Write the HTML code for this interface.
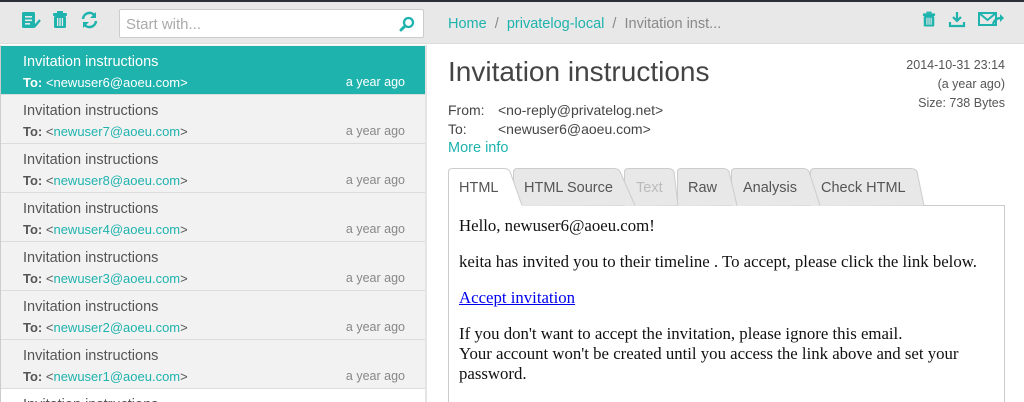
<!DOCTYPE html><html><head><style>
*{margin:0;padding:0;box-sizing:border-box}
html,body{width:1024px;height:402px;overflow:hidden}
body{background:#fff;font-family:"Liberation Sans",sans-serif;position:relative}
.topline{position:absolute;left:0;top:0;width:1024px;height:2px;background:#2b2f3a}
.hdr{position:absolute;left:0;top:2px;width:1024px;height:42px;background:#e8e8e8;border-bottom:1px solid #ddd}
.left{position:absolute;left:0;top:45px;width:427px;height:357px;overflow:hidden;background:#f2f2f2;border-left:1px solid #ccc;border-right:2px solid #e4e4e4}
.row{position:absolute;left:0;width:425px;height:49px;border-bottom:1px solid #dcdcdc;color:#555}
.row .t{position:absolute;left:22px;top:8px;font-size:14.5px}
.row .to{position:absolute;left:22px;top:29px;font-size:13px}
.row .to span{color:#1fb3ae}
.row .a{position:absolute;right:21px;top:29px;font-size:12.5px;color:#888}
.sel{background:#1fb3ae;color:#fff}
.sel .to span,.sel .a{color:#fff}
.search{position:absolute;left:119px;top:7px;width:305px;height:29px;background:#fff;border:1px solid #ccc;border-radius:2px;font-size:15px;color:#aaa;padding:6px 6px}
.bc{position:absolute;left:448px;top:14px;font-size:14.5px;color:#888}
.bc a{color:#1fb3ae}
.h1{position:absolute;left:448px;top:56px;font-size:28px;color:#444}
.meta{position:absolute;right:19px;top:56px;text-align:right;font-size:12.5px;color:#555;line-height:19px}
.hd{position:absolute;left:448px;font-size:14px;color:#444}
.tabs{position:absolute;left:448px;top:168px;width:500px;height:38px;z-index:2}
.tabs span{position:absolute;top:12px;font-size:14.5px;color:#555}
.box{position:absolute;left:448px;top:205px;width:557px;height:197px;overflow:hidden;border:1px solid #ccc;border-bottom:none;font-family:"Liberation Serif",serif;font-size:16.8px;color:#111;padding:10px 10px 0;line-height:20px}
.box p{margin-bottom:16px}
</style></head><body>
<div class="topline"></div>
<div class="hdr">
<svg style="position:absolute;left:21px;top:9px" width="20" height="18" viewBox="0 0 20 18"><rect x="1" y="1" width="13" height="16" rx="1.5" fill="#1fb3ae"/><rect x="4" y="5" width="7" height="1.6" fill="#e8e8e8"/><rect x="4" y="8.5" width="7" height="1.6" fill="#e8e8e8"/><rect x="4" y="12" width="5" height="1.6" fill="#e8e8e8"/><path d="M11 12l3 3 5-6" stroke="#1fb3ae" stroke-width="2.3" fill="none"/></svg>
<svg style="position:absolute;left:52px;top:9px" width="16" height="18" viewBox="0 0 16 18"><rect x="5" y="0" width="6" height="2" fill="#1fb3ae"/><rect x="1" y="2" width="14" height="3" rx="1" fill="#1fb3ae"/><rect x="2" y="5" width="12" height="12" rx="1.5" fill="#1fb3ae"/><rect x="5" y="7" width="1.3" height="8" fill="#e8e8e8"/><rect x="7.4" y="7" width="1.3" height="8" fill="#e8e8e8"/><rect x="9.8" y="7" width="1.3" height="8" fill="#e8e8e8"/></svg>
<svg style="position:absolute;left:80px;top:9px" width="19" height="18" viewBox="0 0 19 18"><path d="M3 8a6.5 6.5 0 0 1 12-3" stroke="#1fb3ae" stroke-width="2.5" fill="none"/><path d="M16 1v6h-6z" fill="#1fb3ae"/><path d="M16 10a6.5 6.5 0 0 1-12 3" stroke="#1fb3ae" stroke-width="2.5" fill="none"/><path d="M3 17v-6h6z" fill="#1fb3ae"/></svg>
<div class="search">Start with...<svg style="position:absolute;right:8px;top:6px" width="16" height="16" viewBox="0 0 16 16"><circle cx="9.5" cy="6.5" r="4.5" stroke="#1fb3ae" stroke-width="2.3" fill="none"/><path d="M6 10l-4 4" stroke="#1fb3ae" stroke-width="3" stroke-linecap="round"/></svg></div>
<div class="bc"><a>Home</a> &nbsp;/&nbsp; <a>privatelog-local</a> &nbsp;/&nbsp; Invitation inst...</div>
<svg style="position:absolute;left:922px;top:9px" width="14" height="17" viewBox="0 0 16 18"><rect x="5" y="0" width="6" height="2" fill="#1fb3ae"/><rect x="1" y="2" width="14" height="3" rx="1" fill="#1fb3ae"/><rect x="2" y="5" width="12" height="12" rx="1.5" fill="#1fb3ae"/><rect x="5" y="7" width="1.3" height="8" fill="#e8e8e8"/><rect x="7.4" y="7" width="1.3" height="8" fill="#e8e8e8"/><rect x="9.8" y="7" width="1.3" height="8" fill="#e8e8e8"/></svg>
<svg style="position:absolute;left:948px;top:9px" width="18" height="17" viewBox="0 0 18 17"><path d="M9 1v9M5 6l4 4 4-4" stroke="#1fb3ae" stroke-width="2.2" fill="none"/><path d="M2 11v4h14v-4" stroke="#1fb3ae" stroke-width="2.2" fill="none"/></svg>
<svg style="position:absolute;left:978px;top:10px" width="27" height="15" viewBox="0 0 27 15"><rect x="1" y="1" width="17" height="12" fill="none" stroke="#1fb3ae" stroke-width="2"/><path d="M1 1l8.5 7 8.5-7" stroke="#1fb3ae" stroke-width="2" fill="none"/><path d="M15 12q2-6 8-6" stroke="#1fb3ae" stroke-width="2.2" fill="none"/><path d="M22 2l4 4-4 4z" fill="#1fb3ae"/></svg>
</div>
<div class="left">
<div class="row sel" style="top:1px"><div class="t">Invitation instructions</div><div class="to"><b>To:</b> &lt;<span>newuser6@aoeu.com</span>&gt;</div><div class="a">a year ago</div></div>
<div class="row" style="top:50px"><div class="t">Invitation instructions</div><div class="to"><b>To:</b> &lt;<span>newuser7@aoeu.com</span>&gt;</div><div class="a">a year ago</div></div>
<div class="row" style="top:99px"><div class="t">Invitation instructions</div><div class="to"><b>To:</b> &lt;<span>newuser8@aoeu.com</span>&gt;</div><div class="a">a year ago</div></div>
<div class="row" style="top:148px"><div class="t">Invitation instructions</div><div class="to"><b>To:</b> &lt;<span>newuser4@aoeu.com</span>&gt;</div><div class="a">a year ago</div></div>
<div class="row" style="top:197px"><div class="t">Invitation instructions</div><div class="to"><b>To:</b> &lt;<span>newuser3@aoeu.com</span>&gt;</div><div class="a">a year ago</div></div>
<div class="row" style="top:246px"><div class="t">Invitation instructions</div><div class="to"><b>To:</b> &lt;<span>newuser2@aoeu.com</span>&gt;</div><div class="a">a year ago</div></div>
<div class="row" style="top:295px"><div class="t">Invitation instructions</div><div class="to"><b>To:</b> &lt;<span>newuser1@aoeu.com</span>&gt;</div><div class="a">a year ago</div></div>
<div class="row" style="top:344px;height:13px;overflow:hidden;border-bottom:none;background:#fff"><div class="t">Invitation instructions</div></div>
</div>
<div class="h1">Invitation instructions</div>
<div class="meta">2014-10-31 23:14<br>(a year ago)<br>Size: 738 Bytes</div>
<div class="hd" style="top:102px">From:</div><div class="hd" style="left:498px;top:102px">&lt;no-reply@privatelog.net&gt;</div>
<div class="hd" style="top:121px">To:</div><div class="hd" style="left:498px;top:121px">&lt;newuser6@aoeu.com&gt;</div>
<div class="hd" style="top:140px;color:#1fb3ae;font-size:14.5px">More info</div>
<div class="tabs">
<svg width="500" height="38" style="position:absolute;left:0;top:0">
<g fill="#e8e8e8" stroke="#ccc">
<path d="M362.5 38V4Q362.5 .5 366.5 .5H463Q467 .5 469 3.5L476 37.5"/>
<path d="M283.5 38V4Q283.5 .5 287.5 .5H355Q359 .5 361 3.5L372 37.5"/>
<path d="M229.5 38V4Q229.5 .5 233.5 .5H275Q279 .5 281 3.5L289 37.5"/>
<path d="M176.5 38V4Q176.5 .5 180.5 .5H220Q224 .5 226 3.5L230 37.5"/>
<path d="M65.5 38V4Q65.5 .5 69.5 .5H166Q170 .5 172 3.5L187 37.5"/>
</g>
<path d="M0.5 38V4Q0.5 .5 4.5 .5H56Q60 .5 62 3.5L74 37.5" fill="#fff" stroke="#ccc"/>
<rect x="1" y="37" width="73" height="2" fill="#fff"/>
</svg>
<span style="left:11px">HTML</span>
<span style="left:76px">HTML Source</span>
<span style="left:188px;color:#bbb">Text</span>
<span style="left:240px">Raw</span>
<span style="left:295px">Analysis</span>
<span style="left:373px">Check HTML</span>
</div>
<div class="box">
<p>Hello, newuser6@aoeu.com!</p>
<p>keita has invited you to their timeline . To accept, please click the link below.</p>
<p><a style="color:#00e;text-decoration:underline">Accept invitation</a></p>
<p>If you don't want to accept the invitation, please ignore this email.<br>Your account won't be created until you access the link above and set your password.</p>
</div>
</body></html>
